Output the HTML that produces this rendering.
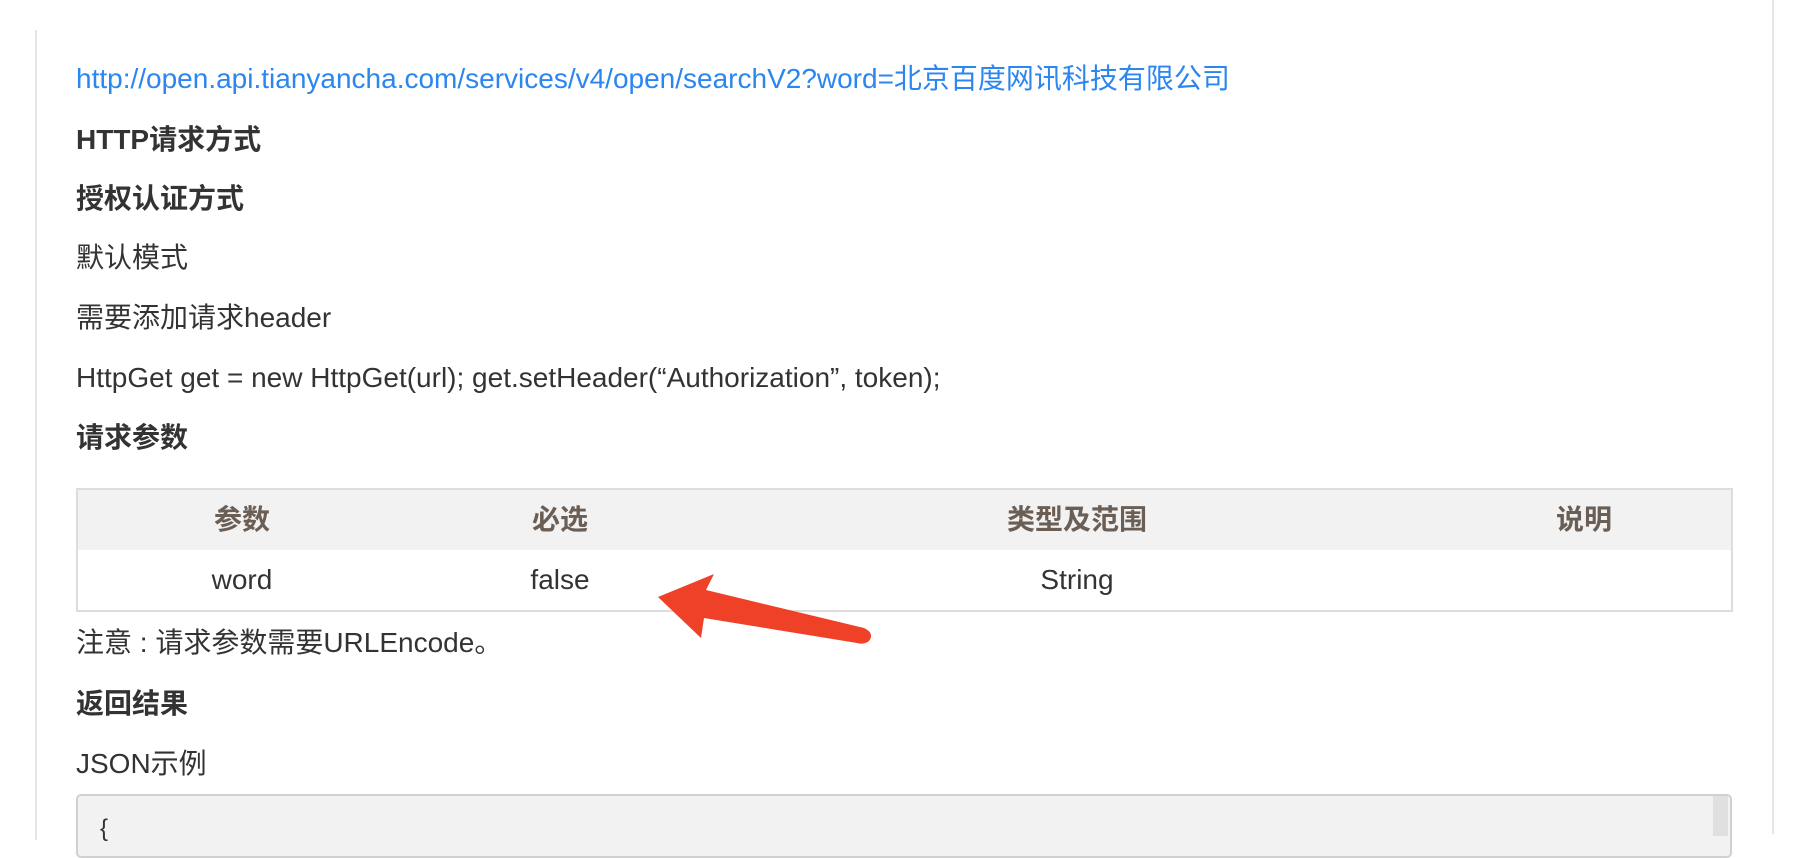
<!DOCTYPE html>
<html><head><meta charset="utf-8"><style>
body{margin:0;width:1812px;height:834px;background:#fff;overflow:hidden;position:relative;font-family:"Liberation Sans","Noto Sans CJK SC",sans-serif;color:#333;font-size:28px}
.t{position:absolute;left:76px;height:40px;line-height:40px;white-space:nowrap}
.b{font-weight:bold}
.c{position:absolute;height:40px;line-height:40px;text-align:center;white-space:nowrap}
</style></head><body>
<div style="position:absolute;left:35px;top:30px;width:2px;height:810px;background:#e6e6e6"></div>
<div style="position:absolute;left:1772px;top:0;width:2px;height:834px;background:#e6e6e6"></div>
<div class="t" style="top:59px;color:#2b86f0">http://open.api.tianyancha.com/services/v4/open/searchV2?word=北京百度网讯科技有限公司</div>
<div class="t b" style="top:120px">HTTP请求方式</div>
<div class="t b" style="top:179px">授权认证方式</div>
<div class="t" style="top:238px">默认模式</div>
<div class="t" style="top:298px">需要添加请求header</div>
<div class="t" style="top:358px">HttpGet get = new HttpGet(url); get.setHeader(“Authorization”, token);</div>
<div class="t b" style="top:418px">请求参数</div>
<div style="position:absolute;left:76px;top:488px;width:1653px;height:120px;border:2px solid #ddd;background:#fff"></div>
<div style="position:absolute;left:78px;top:490px;width:1653px;height:60px;background:#f2f2f2"></div>
<div class="c b" style="left:142px;width:200px;top:500px;color:#6b5f55">参数</div>
<div class="c b" style="left:460px;width:200px;top:500px;color:#6b5f55">必选</div>
<div class="c b" style="left:977px;width:200px;top:500px;color:#6b5f55">类型及范围</div>
<div class="c b" style="left:1484px;width:200px;top:500px;color:#6b5f55">说明</div>
<div class="c" style="left:142px;width:200px;top:560px">word</div>
<div class="c" style="left:460px;width:200px;top:560px">false</div>
<div class="c" style="left:977px;width:200px;top:560px">String</div>
<div class="t" style="top:623px">注意 : 请求参数需要URLEncode。</div>
<div class="t b" style="top:684px">返回结果</div>
<div class="t" style="top:744px">JSON示例</div>
<div style="position:absolute;left:76px;top:794px;width:1652px;height:60px;border:2px solid #d0d0d0;border-radius:5px;background:#f2f2f2"></div>
<div style="position:absolute;left:1713px;top:796px;width:15px;height:40px;background:#e0e0e0"></div>
<div style="position:absolute;left:100px;top:815px;font-size:24px">{</div>
<svg style="position:absolute;left:0;top:0" width="1812" height="834">
<path d="M658,597 L714,574 L706,590 L864,628 Q875,633 869,641 Q864,645 857,643 L704,618 L701,638 Z" fill="#ee4128"/>
</svg>
</body></html>
